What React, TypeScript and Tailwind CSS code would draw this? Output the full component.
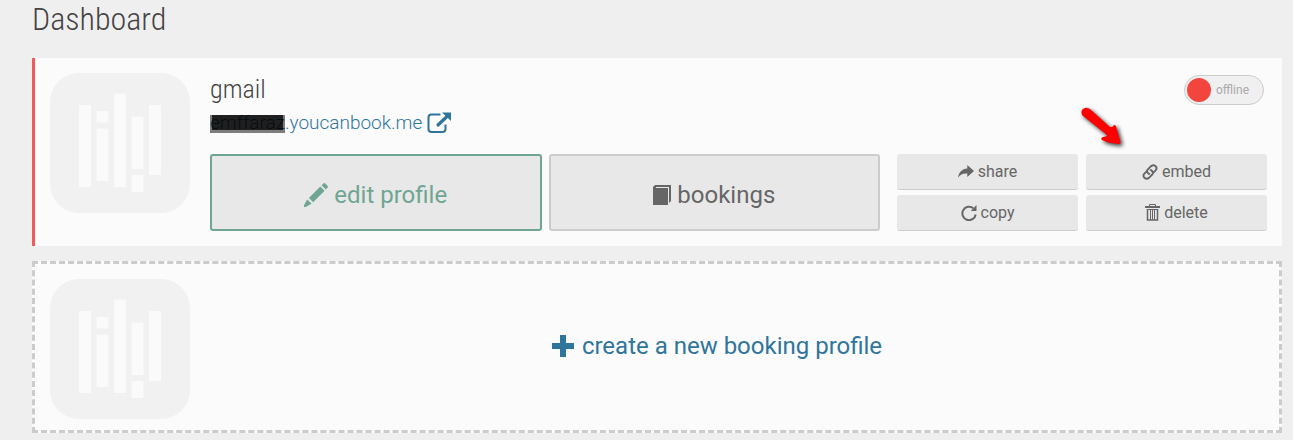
import { useState, type ReactNode } from "react";

function Logo() {
  return (
    <svg viewBox="0 0 140 140" className="size-[140px] shrink-0" aria-hidden="true">
      <rect width="140" height="140" rx="29" fill="#f1f1f1" />
      <g fill="#fafafa">
        <rect x="29" y="32" width="12" height="82" />
        <rect x="46.5" y="38" width="12" height="11.5" />
        <rect x="46.5" y="55.5" width="12" height="52.5" />
        <rect x="64" y="20.500" width="12" height="93.500" />
        <rect x="81.500" y="43.500" width="12" height="52.500" />
        <rect x="81.500" y="102" width="12" height="17" />
        <rect x="99" y="32" width="12" height="70" />
      </g>
    </svg>
  );
}

function PopOutIcon() {
  return (
    <svg viewBox="0 0 25 22" className="h-[22px] w-[25px]" fill="none" stroke="#2f759b" aria-hidden="true">
      <path d="M13.500 2.500H4.500Q1.500 2.500 1.500 5.500V17Q1.500 20 4.500 20H15.500Q18.500 20 18.500 17V12.500" strokeWidth="2" />
      <path d="M11 13L20 4.500" strokeWidth="3.200" strokeLinecap="round" />
      <path d="M15 .5H24V9Z" fill="#2f759b" stroke="none" />
    </svg>
  );
}

function PencilIcon() {
  return (
    <svg viewBox="0 0 24 24" className="size-6" fill="currentColor" aria-hidden="true">
      <path d="M20 0Q20.700-.1 21.300.5L23.500 2.700Q24.100 3.400 23.900 4.200L21.800 6.500L17.600 2.300Z" />
      <path d="M16.300 3.500L20.600 7.800L9.200 19.200L4.900 14.900Z" />
      <path d="M3.300 16.500L7.600 20.800L4.800 22.200L1.700 24H0V22.300L1.600 19.300Z" />
    </svg>
  );
}

function BookIcon() {
  return (
    <svg viewBox="0 0 18 20" className="h-5 w-[18px]" fill="currentColor" aria-hidden="true">
      <path d="M0 2L2 0H18V16L16 18V2H3V3H15V20H0Z" />
    </svg>
  );
}

function ShareIcon() {
  return (
    <svg viewBox="0 0 16 13" className="h-[13px] w-4" fill="currentColor" aria-hidden="true">
      <path d="M9.300 0L16 6L9.300 12V8.600C5 8.200 2.500 9.500 0 12.700C.8 7.500 4 4 9.300 3.600Z" />
    </svg>
  );
}

function LinkIcon() {
  return (
    <svg viewBox="0 0 16 16" className="size-4" fill="none" stroke="currentColor" strokeWidth="1.900" aria-hidden="true">
      <path d="M10.800 9.200L13.400 6.600Q15.600 4.300 13.600 2.200Q11.300.2 9 2.200L5.700 5.500Q4.300 7.500 6 9L7.800 10.400" />
      <path d="M5.200 6.800L2.600 9.400Q.4 11.700 2.400 13.800Q4.700 15.800 7 13.800L10.300 10.500Q11.700 8.500 10 7L8.200 5.600" />
    </svg>
  );
}

function CopyIcon() {
  return (
    <svg viewBox="0 0 16 16" className="size-4" aria-hidden="true">
      <path d="M12.300 3.200A6.700 6.700 0 1 0 14.700 9.500" fill="none" stroke="currentColor" strokeWidth="2" />
      <path d="M15.500 0V6H9.800Z" fill="currentColor" />
    </svg>
  );
}

function TrashIcon() {
  return (
    <svg viewBox="0 0 15 17" className="h-[17px] w-[15px]" fill="none" stroke="currentColor" aria-hidden="true">
      <path d="M0 3H15" strokeWidth="2" />
      <path d="M4.500 2V.5H10.500V2" />
      <path d="M2.500 5V16H12.500V5" strokeWidth="1.500" />
      <path d="M5.500 5V16M7.500 5V16M9.500 5V16" />
      <path d="M2 5.500H13" />
    </svg>
  );
}

function PlusIcon() {
  return (
    <svg viewBox="0 0 22 22" className="size-[22px]" fill="currentColor" aria-hidden="true">
      <path d="M8 0H14V8H22V14H14V22H8V14H0V8H8Z" />
    </svg>
  );
}

function PointerArrow() {
  return (
    <svg
      viewBox="0 0 50 50"
      className="pointer-events-none absolute top-[44px] right-[154px] size-[50px] overflow-visible drop-shadow-[2px_2px_2px_rgba(0,0,0,0.8)]"
      aria-hidden="true"
    >
      <path
        d="M4.500 13.500Q2.300 10 4.500 7.300Q8 4 12.500 7.500L32 25L34.300 25Q35 23 37 23Q38.500 24 38.700 27L42.600 40.500Q42.500 42 40 42L30 40.500L24 38Q22.500 36.500 24.300 35.300L29.500 34L26.500 31Z"
        fill="#fe0000"
      />
    </svg>
  );
}

function LargeButton({ tone, icon, children }: { tone: "green" | "gray"; icon: ReactNode; children: ReactNode }) {
  const color = tone === "green" ? "border-[#70a593] text-[#70a593]" : "border-[#cccccc] text-[#666666]";
  return (
    <button
      type="button"
      className={`flex min-w-0 flex-1 items-center justify-center gap-1.5 rounded-[3px] border-2 bg-[#e8e8e8] pt-1 text-2xl ${color}`}
    >
      {icon}
      {children}
    </button>
  );
}

function SmallButton({ icon, children }: { icon: ReactNode; children: ReactNode }) {
  return (
    <button
      type="button"
      className="flex h-9 items-center justify-center gap-1 rounded-[3px] border-b border-[#cccccc] bg-[#e8e8e8] text-base text-[#666666]"
    >
      {icon}
      {children}
    </button>
  );
}

function StatusSwitch() {
  const [online, setOnline] = useState(false);
  return (
    <label className="flex h-[30px] w-20 cursor-pointer items-center gap-[5px] rounded-full border border-[#cccccc] bg-[#f0f0f0] px-0.5 text-xs text-[#aaaaaa]">
      <input
        type="checkbox"
        checked={online}
        onChange={(e) => setOnline(e.target.checked)}
        className="size-6 shrink-0 appearance-none rounded-full bg-[#f2453d] checked:bg-[#70a593]"
      />
      {online ? "online" : "offline"}
    </label>
  );
}

export default function App() {
  return (
    <main className="min-h-screen bg-[#efefef] pr-[11px] pb-2 pl-8 font-['Roboto',sans-serif]">
      <h1 className="pb-5 font-['Roboto_Condensed','Roboto',sans-serif] text-[32px] leading-[38px] font-light text-[#444444]">
        Dashboard
      </h1>

      <section className="relative flex gap-5 border-l-[3px] border-[#f25a5a] bg-[#fbfbfb] p-[15px]">
        <Logo />
        <div className="flex min-w-0 flex-1 flex-col">
          <div className="flex items-start justify-between pr-[3px]">
            <div>
              <h2 className="font-['Roboto_Condensed','Roboto',sans-serif] text-[26px] leading-8 font-light text-[#444444]">
                gmail
              </h2>
              <a href="#profile" className="flex items-center gap-[5px] pt-1 text-[19px] leading-7 font-light text-[#2f759b]">
                <span>
                  <span className="relative">
                    emffaraz
                    <span className="absolute inset-x-0 top-1 h-[18px] bg-black/50" />
                    <span className="absolute top-1 right-0.5 left-0.5 h-[15px] bg-black/75" />
                  </span>
                  .youcanbook.me
                </span>
                <PopOutIcon />
              </a>
            </div>
            <div className="pt-0.5">
              <StatusSwitch />
            </div>
          </div>
          <div className="mt-[17px] flex gap-[17px]">
            <div className="flex flex-1 gap-[7px]">
              <LargeButton tone="green" icon={<PencilIcon />}>
                edit profile
              </LargeButton>
              <LargeButton tone="gray" icon={<BookIcon />}>
                bookings
              </LargeButton>
            </div>
            <div className="grid w-[35%] grid-cols-2 gap-x-2 gap-y-[5px]">
              <SmallButton icon={<ShareIcon />}>share</SmallButton>
              <SmallButton icon={<LinkIcon />}>embed</SmallButton>
              <SmallButton icon={<CopyIcon />}>copy</SmallButton>
              <SmallButton icon={<TrashIcon />}>delete</SmallButton>
            </div>
          </div>
        </div>
        <PointerArrow />
      </section>

      <section className="mt-[15px] flex items-center border-[3px] border-dashed border-[#cccccc] bg-[#fbfbfb] p-[15px] pb-[11px]">
        <Logo />
        <button type="button" className="mr-5 flex flex-1 items-center justify-center gap-2 pb-1.5 text-2xl text-[#2f759b]">
          <PlusIcon />
          create a new booking profile
        </button>
      </section>
    </main>
  );
}
